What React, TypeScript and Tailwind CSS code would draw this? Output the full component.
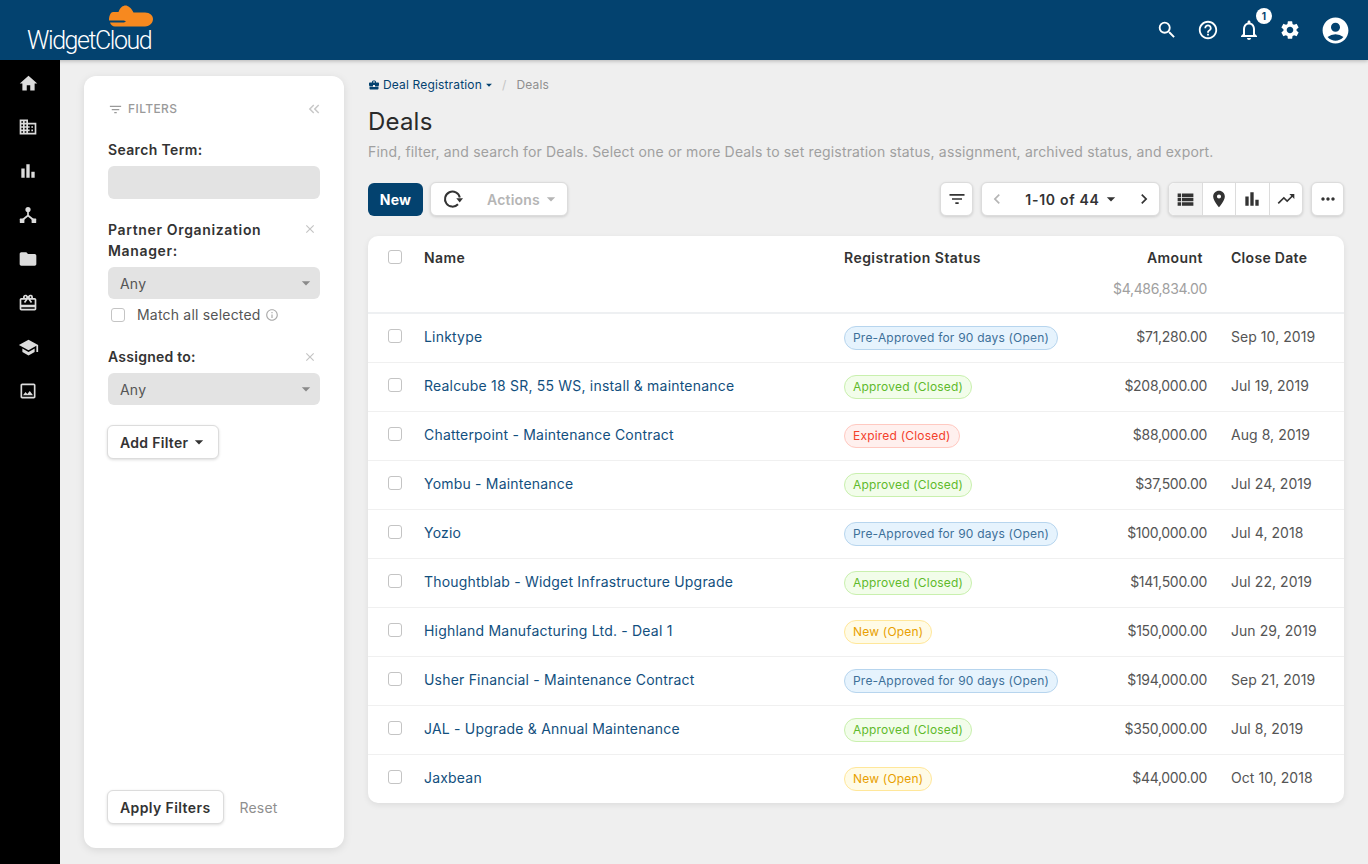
import React from "react";
import {
  MdHome, MdDomain, MdBarChart, MdFolder, MdCardGiftcard, MdSchool, MdOutlinePhoto, MdSearch, MdHelpOutline,
  MdNotificationsNone, MdSettings, MdAccountCircle, MdFilterList, MdChevronLeft, MdChevronRight, MdViewList,
  MdPlace, MdTrendingUp, MdMoreHoriz, MdBusinessCenter, MdKeyboardDoubleArrowLeft, MdClose, MdInfoOutline,
  MdArrowDropDown,
} from "react-icons/md";

type Status = "pre" | "app" | "exp" | "new";
const rows: [string, Status, string, string][] = [
  ["Linktype", "pre", "$71,280.00", "Sep 10, 2019"],
  ["Realcube 18 SR, 55 WS, install & maintenance", "app", "$208,000.00", "Jul 19, 2019"],
  ["Chatterpoint - Maintenance Contract", "exp", "$88,000.00", "Aug 8, 2019"],
  ["Yombu - Maintenance", "app", "$37,500.00", "Jul 24, 2019"],
  ["Yozio", "pre", "$100,000.00", "Jul 4, 2018"],
  ["Thoughtblab - Widget Infrastructure Upgrade", "app", "$141,500.00", "Jul 22, 2019"],
  ["Highland Manufacturing Ltd. - Deal 1", "new", "$150,000.00", "Jun 29, 2019"],
  ["Usher Financial - Maintenance Contract", "pre", "$194,000.00", "Sep 21, 2019"],
  ["JAL - Upgrade & Annual Maintenance", "app", "$350,000.00", "Jul 8, 2019"],
  ["Jaxbean", "new", "$44,000.00", "Oct 10, 2018"],
];

const pill: Record<Status, { label: string; cls: string }> = {
  pre: { label: "Pre-Approved for 90 days (Open)", cls: "bg-[#e6f3fd] border-[#b7d5ee] text-[#3d7099]" },
  app: { label: "Approved (Closed)", cls: "bg-[#f2fdea] border-[#c9f0ae] text-[#5fba2b]" },
  exp: { label: "Expired (Closed)", cls: "bg-[#fff0ee] border-[#ffc9c1] text-[#f3412b]" },
  new: { label: "New (Open)", cls: "bg-[#fffbe6] border-[#ffe79a] text-[#e89f00]" },
};

function Check({ className = "" }: { className?: string }) {
  return <span className={"block w-[14px] h-[14px] bg-white border border-[#c4c4c4] rounded-[3px] " + className} />;
}

function NetworkIcon() {
  return (
    <svg width="18" height="18" viewBox="0 0 18 18" fill="currentColor">
      <circle cx="9" cy="3.5" r="2.6" />
      <rect x="0.8" y="12.6" width="4.6" height="4.4" rx="0.6" />
      <rect x="12.6" y="12.6" width="4.6" height="4.4" rx="0.6" />
      <path d="M9 5v4.500M9 9.500l-5 4M9 9.500l5 4" stroke="currentColor" strokeWidth="1.7" fill="none" />
    </svg>
  );
}

function RefreshIcon() {
  return (
    <svg width="20" height="20" viewBox="0 0 20 20" className="text-[#333]">
      <path d="M16.800 8.500A7.500 7.500 0 1 0 15 15.200" stroke="currentColor" strokeWidth="2" fill="none" />
      <path d="M13.300 9.300H20L16.700 13.500Z" fill="currentColor" />
    </svg>
  );
}

function SelectBox() {
  return (
    <div className="h-8 bg-[#e3e3e3] rounded-[6px] pl-3 pr-1 flex items-center justify-between text-[#555]">
      <span>Any</span>
      <MdArrowDropDown size={20} className="text-[#8a8a8a]" />
    </div>
  );
}

function Btn({ className = "", children }: { className?: string; children: React.ReactNode }) {
  return (
    <div className={"h-[34px] bg-white border border-[#dcdcdc] rounded-[6px] shadow-[0_1px_3px_rgba(0,0,0,0.14)] flex items-center " + className}>
      {children}
    </div>
  );
}

export default function App() {
  return (
    <div className="w-[1368px] h-[864px] overflow-hidden flex flex-col bg-[#efefef] text-[14px] text-[#333] tracking-[0.2px]" style={{ fontFamily: '"Inter", "Noto Sans", sans-serif' }}>
      <header className="h-[60px] shrink-0 bg-[#03426f] flex items-center justify-between shadow-[0_1px_4px_rgba(0,0,0,0.25)] z-10">
        <div className="relative ml-[27px] w-[130px] h-[60px]">
          <svg className="absolute left-[82px] top-[5px]" width="44" height="22" viewBox="0 0 44 22">
            <path fill="#f7891f" d="M4 7H9.500C11 2.500 14 .5 16.500 .5S22 2.500 24.500 7.500H36C41 7.500 44 10.500 44 14S41 21.500 36 21.500H6C3.500 21.500 1.500 19.500 1 17.500H15L17 16.500L15 15.500H0C0 10 2 7 4 7Z" />
          </svg>
          <span className="absolute left-0 top-[25px] text-white text-[25px] leading-[32px] tracking-[-1.45px] font-light whitespace-nowrap" style={{ fontFamily: 'Roboto, sans-serif' }}>WidgetCloud</span>
        </div>
        <div className="flex items-center text-white mr-[17px]">
          <MdSearch size={22} className="mr-[19px]" />
          <MdHelpOutline size={22} className="mr-[18px]" />
          <div className="relative mr-[18px]">
            <MdNotificationsNone size={24} />
            <span className="absolute left-[19px] -top-[10px] w-4 h-4 rounded-full bg-white text-[#03426f] text-[10px] font-bold flex items-center justify-center">1</span>
          </div>
          <MdSettings size={22} className="mr-[19px]" />
          <MdAccountCircle size={31} />
        </div>
      </header>
      <div className="flex flex-1 min-h-0">
        <nav className="w-[60px] shrink-0 bg-black flex flex-col items-center pt-[13px] pr-[4px] gap-[24px] text-[#dcdcdc]">
          {[<MdHome size={21} />, <MdDomain size={20} />, <MdBarChart size={20} />, <NetworkIcon />, <MdFolder size={20} />, <MdCardGiftcard size={20} />, <MdSchool size={21} />, <MdOutlinePhoto size={20} />].map((ic, i) => (
            <div key={i} className="h-[20px] flex items-center justify-center">{ic}</div>
          ))}
        </nav>
        <aside className="w-[260px] shrink-0 ml-[24px] mt-[16px] mb-[16px] bg-white rounded-[12px] shadow-[0_2px_8px_rgba(0,0,0,0.1)] pl-[24px] pr-[24px] pt-[24px] pb-[24px] flex flex-col">
          <div className="flex items-center justify-between h-[18px] text-[#9a9a9a]">
            <div className="flex items-center gap-[5px] text-[12px] font-medium tracking-[0.4px]">
              <MdFilterList size={15} />
              <span>FILTERS</span>
            </div>
            <MdKeyboardDoubleArrowLeft size={18} className="text-[#c8c8c8] -mr-[3px]" />
          </div>
          <div className="mt-[21px] font-semibold text-[#333] leading-[21px] tracking-[0.35px]">Search Term:</div>
          <div className="mt-[6px] h-[33px] bg-[#e3e3e3] rounded-[6px]" />
          <div className="mt-[20px] flex justify-between items-start font-semibold leading-[21px] tracking-[0.65px]">
            <span>Partner Organization<br />Manager:</span>
            <MdClose size={14} className="text-[#c4c4c4] mt-[3px] mr-[3px]" />
          </div>
          <div className="mt-[6px]"><SelectBox /></div>
          <div className="mt-[7px] ml-[3px] flex items-center text-[#555] leading-[18px]">
            <Check />
            <span className="ml-[12px]">Match all selected</span>
            <MdInfoOutline size={14} className="ml-[4px] text-[#aaa]" />
          </div>
          <div className="mt-[22px] flex justify-between items-center font-semibold leading-[21px] tracking-[0.25px]">
            <span>Assigned to:</span>
            <MdClose size={14} className="text-[#c4c4c4] mr-[3px]" />
          </div>
          <div className="mt-[6px]"><SelectBox /></div>
          <div className="mt-[20px] self-start -ml-px">
            <Btn className="pl-3 pr-[9px] font-semibold tracking-[0.3px]">
              Add Filter <MdArrowDropDown size={20} className="ml-[1px]" />
            </Btn>
          </div>
          <div className="mt-auto flex items-center -ml-px">
            <Btn className="px-3 font-semibold tracking-[0.4px]">Apply Filters</Btn>
            <span className="ml-[16px] text-[#8f8f8f]">Reset</span>
          </div>
        </aside>
        <main className="flex-1 min-w-0 ml-[24px] mr-[24px] pt-[16px]">
          <div className="flex items-center h-[18px] text-[12px] tracking-[0.16px]">
            <MdBusinessCenter size={12} className="text-[#03426f]" />
            <span className="ml-[3px] text-[#03426f]">Deal Registration</span>
            <MdArrowDropDown size={14} className="text-[#03426f]" />
            <span className="ml-[6px] text-[#c4c4c4]">/</span>
            <span className="ml-[10px] text-[#8f8f8f]">Deals</span>
          </div>
          <h1 className="mt-[10px] text-[24px] leading-[36px] font-normal text-[#2a2a2a]">Deals</h1>
          <p className="mt-[2px] leading-[20px] text-[#a0a0a0] tracking-[0.16px]">Find, filter, and search for Deals. Select one or more Deals to set registration status, assignment, archived status, and export.</p>
          <div className="mt-[20px] flex items-center">
            <div className="h-[33px] w-[55px] rounded-[6px] bg-[#03426f] text-white font-bold flex items-center justify-center">New</div>
            <Btn className="ml-[7px] w-[138px] pl-[12px] text-[#b5b5b5] font-semibold">
              <RefreshIcon />
              <span className="ml-[24px]">Actions</span>
              <MdArrowDropDown size={20} className="ml-[1px]" />
            </Btn>
            <div className="ml-auto flex items-center gap-2">
              <Btn className="w-[33px] justify-center"><MdFilterList size={20} /></Btn>
              <Btn className="w-[179px] justify-between px-[5px] font-semibold tracking-[0.7px]">
                <MdChevronLeft size={20} className="text-[#b5b5b5]" />
                <span className="flex items-center pl-[5px]">1-10 of 44 <MdArrowDropDown size={20} className="ml-px" /></span>
                <MdChevronRight size={20} />
              </Btn>
              <Btn className="w-[135px]">
                <div className="flex-1 h-full bg-[#f3f3f3] rounded-l-[6px] flex items-center justify-center"><MdViewList size={21} /></div>
                <div className="flex-1 h-full border-l border-[#dcdcdc] flex items-center justify-center"><MdPlace size={20} /></div>
                <div className="flex-1 h-full border-l border-[#dcdcdc] flex items-center justify-center"><MdBarChart size={20} /></div>
                <div className="flex-1 h-full border-l border-[#dcdcdc] flex items-center justify-center"><MdTrendingUp size={20} /></div>
              </Btn>
              <Btn className="w-[33px] justify-center"><MdMoreHoriz size={20} /></Btn>
            </div>
          </div>
          <section className="mt-[20px] bg-white rounded-[10px] shadow-[0_2px_6px_rgba(0,0,0,0.08)]">
            <div className="h-[78px] border-b-2 border-[#eef0f2] flex font-semibold tracking-[0.45px]">
              <div className="w-[56px] pl-[20px] pt-[14px]"><Check /></div>
              <div className="w-[420px] pt-[12px] leading-[20px]">Name</div>
              <div className="w-[240px] pt-[12px] leading-[20px]">Registration Status</div>
              <div className="w-[123px] pt-[12px] leading-[20px] text-right flex flex-col items-end">
                <span className="pr-[4px]">Amount</span>
                <span className="mt-[11px] font-normal text-[#a0a0a0] tracking-[-0.35px]">$4,486,834.00</span>
              </div>
              <div className="ml-[24px] pt-[12px] leading-[20px] tracking-[0.3px]">Close Date</div>
            </div>
            {rows.map(([name, st, amt, date], i) => (
              <div key={name} className={"flex items-center " + (i < rows.length - 1 ? "h-[49px] border-b border-[#f0f0f0]" : "h-[48px]")}>
                <div className="w-[56px] pl-[20px] -mt-[4px]"><Check /></div>
                <div className="w-[420px] text-[#124f7e] -mt-[3px]">{name}</div>
                <div className="w-[240px]">
                  <span className={"inline-flex items-center h-[24px] px-[8px] rounded-full border text-[12px] tracking-[0.2px] " + pill[st].cls}>{pill[st].label}</span>
                </div>
                <div className="w-[123px] text-right text-[#555] tracking-[-0.3px] -mt-[3px]">{amt}</div>
                <div className="ml-[24px] text-[#555] tracking-[0.05px] -mt-[3px]">{date}</div>
              </div>
            ))}
          </section>
        </main>
      </div>
    </div>
  );
}
